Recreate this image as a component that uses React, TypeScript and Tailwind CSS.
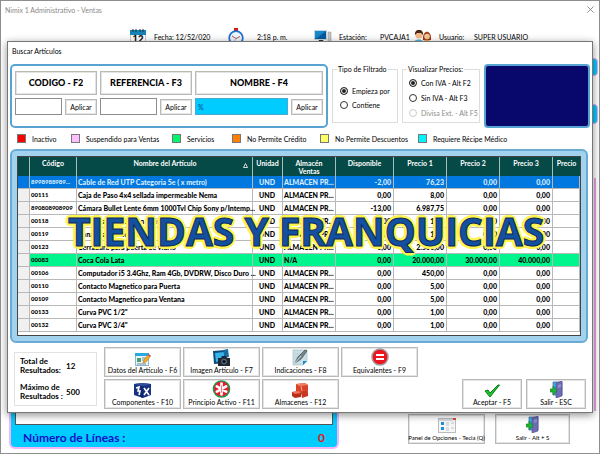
import React, { useState } from "react";

const btn = "border border-[#b9b9b9] bg-white text-black shadow-[inset_0_0_0_1px_#e4e4e4]";

function Calendar() {
  return (
    <svg viewBox="0 0 16 17" className="h-[17px] w-4 shrink-0">
      <rect x="0" y="2" width="16" height="15" fill="#fff" stroke="#999" strokeWidth="1" />
      <rect x="0" y="1" width="16" height="5" fill="#1583b5" />
      <path d="M3 0v3M6 0v3M10 0v3M13 0v3" stroke="#234" strokeWidth="1" />
      <text x="8" y="14" textAnchor="middle" fontSize="10" fontWeight="700" fontFamily="Liberation Sans, sans-serif" fill="#111">12</text>
    </svg>
  );
}

function Clock() {
  return (
    <svg viewBox="0 0 16 18" className="h-[18px] w-4 shrink-0">
      <rect x="6" y="0" width="4" height="3" fill="#d01818" />
      <circle cx="8" cy="10" r="6.8" fill="#eef6ff" stroke="#2374cf" strokeWidth="1.8" />
      <path d="M4 8l4 2.500 4-2" fill="none" stroke="#b05050" strokeWidth="1" />
      <path d="M8 10.500l-2 3" stroke="#888" strokeWidth=".6" />
    </svg>
  );
}

function Computer() {
  return (
    <svg viewBox="0 0 18 14" className="h-[14px] w-[18px] shrink-0">
      <rect x="0" y="0" width="13" height="10" fill="#c9d6dc" />
      <rect x="1" y="1" width="11" height="8" fill="#065a9c" />
      <path d="M1 1h11L3 8H1z" fill="#1788cc" />
      <path d="M5 10h4l1 2H4z" fill="#333" />
      <path d="M14 2h3v12h-3z" fill="#c3c8ca" stroke="#888" strokeWidth=".5" />
    </svg>
  );
}

function People() {
  return (
    <svg viewBox="0 0 19 14" className="h-[14px] w-[19px] shrink-0">
      <path d="M0 14c0-6 11-6 12 0z" fill="#53b7da" />
      <circle cx="6" cy="5" r="3.600" fill="#f3b98a" />
      <path d="M2 5c-1-7 9-7 8 0L8 3H4z" fill="#4a2713" />
      <path d="M10 10c-1-11 9-11 8 0z" fill="#9a3e10" />
      <circle cx="14" cy="6.500" r="2.800" fill="#f7c69b" />
      <path d="M9 14c0-5 9-6 10 0z" fill="#f3a25d" />
    </svg>
  );
}

function CardEdit() {
  return (
    <svg viewBox="0 0 16 14" className="h-[14px] w-4">
      <rect x=".5" y="1.500" width="13" height="12" fill="#e8f5fa" stroke="#86b9cf" />
      <rect x="0" y="1" width="14" height="3" fill="#29a9dc" />
      <rect x="2" y="6" width="4" height="4" fill="#48a070" />
      <path d="M7 6h4M7 8h4M2 12h9" stroke="#789" strokeWidth="1" />
      <path d="M8 11l1-3 4-5 2 2-4 5z" fill="#f6ac1d" stroke="#b06a14" strokeWidth=".5" />
      <path d="M13 3l1-1 2 2-1 1z" fill="#e23a3a" />
    </svg>
  );
}

function Photo() {
  return (
    <svg viewBox="0 0 17 17" className="h-[17px] w-[17px]">
      <path d="M0 2l12-1 1 13-12 1z" fill="#0b4c7b" />
      <path d="M2 4l9-1v9l-8 1z" fill="#36b4ea" />
      <path d="M10 1l5-1 1 8-4 1z" fill="#176ca2" />
      <path d="M5 9h3l1-2h4l1 2h3v8H5z" fill="#1e2630" />
      <circle cx="11" cy="12.500" r="3" fill="#4d5f72" />
      <circle cx="11" cy="12.500" r="1.600" fill="#0b1320" />
    </svg>
  );
}

function Note() {
  return (
    <svg viewBox="0 0 17 17" className="h-[17px] w-[17px]">
      <path d="M1 1h14v11l-4 4H1z" fill="#c9dfe5" stroke="#9bb6be" strokeWidth=".6" />
      <path d="M11 16v-4h4z" fill="#1689c7" />
      <path d="M3 5h9M3 8h9M3 11h6" stroke="#a5c0c8" strokeWidth=".7" />
      <path d="M3 14l3-6 7-7 2 1-6 8z" fill="#77858b" stroke="#3e4b50" strokeWidth=".7" />
      <path d="M3 14l6-7" stroke="#e7eff1" strokeWidth=".8" />
    </svg>
  );
}

function Equal() {
  return (
    <svg viewBox="0 0 18 18" className="h-[18px] w-[18px]">
      <circle cx="9" cy="9" r="8" fill="#ee1420" stroke="#9c9c9c" strokeWidth="1.500" />
      <path d="M5 7h8M5 11h8" stroke="#fff" strokeWidth="2" />
    </svg>
  );
}

function Boxes() {
  return (
    <svg viewBox="0 0 17 16" className="h-4 w-[17px]">
      <path d="M0 2l8-1 9 1v11l-8 3-9-3z" fill="#17307f" />
      <path d="M0 2l8-1 9 1-8 2z" fill="#31509f" />
      <path d="M8 4v12" stroke="#0a1c57" />
      <path d="M2 6l3-1-1 4 2 0-1 4M10 6l5 7M15 6l-5 7" fill="none" stroke="#fff" strokeWidth="1.600" />
    </svg>
  );
}

function Star() {
  return (
    <svg viewBox="0 0 20 20" className="h-[19px] w-[19px]">
      <circle cx="10" cy="10" r="9" fill="#e51f31" stroke="#1c9a4b" strokeWidth="1.600" />
      <path d="M10 4v12M4.800 7l10.400 6M15.200 7L4.800 13" stroke="#fff" strokeWidth="3" strokeLinecap="round" />
      <path d="M10 6v8" stroke="#e51f31" strokeWidth=".7" />
    </svg>
  );
}

function Warehouse() {
  return (
    <svg viewBox="0 0 17 15" className="h-[15px] w-[17px]">
      <path d="M4 1l9-1 3 2v8l-9 1-3-3z" fill="#d8432a" />
      <path d="M4 1l9-1 3 2-9 1z" fill="#f28064" />
      <path d="M0 9l7-1 2 2v4l-6 1-3-2z" fill="#b92d19" />
      <path d="M0 9l7-1 2 2-6 1z" fill="#ee7657" />
      <path d="M9 9l5-1 2 2v3l-6 2z" fill="#c63821" />
      <path d="M9 3l1 5" stroke="#f4a083" />
    </svg>
  );
}

function Check() {
  return (
    <svg viewBox="0 0 16 14" className="h-[14px] w-4">
      <path d="M1 7l3-1 2 3 8-8 1.500 0L6 13z" fill="#20c32e" stroke="#087c16" strokeWidth="1" />
    </svg>
  );
}

function Door() {
  return (
    <svg viewBox="0 0 13 17" className="h-[17px] w-[13px]">
      <path d="M3 1h9v13H3z" fill="#35b2e9" stroke="#4f5c93" strokeWidth=".7" />
      <path d="M6 2l6-2v15l-6 2z" fill="#6d6cb4" stroke="#4b4a86" strokeWidth=".6" />
      <path d="M8 4l3-1v3l-3 1z" fill="#8f90cc" />
      <path d="M0 8h3V5l4 4.500L3 14v-3H0z" fill="#21b534" stroke="#0b7a1e" strokeWidth=".6" />
    </svg>
  );
}

function Options() {
  return (
    <svg viewBox="0 0 18 15" className="h-[15px] w-[18px]">
      <rect x=".5" y=".5" width="17" height="14" fill="#f6f6f6" stroke="#b9bcc0" />
      <path d="M1 2h14" stroke="#d6d9dd" strokeWidth="2" />
      <rect x="15" y="0" width="3" height="2" fill="#e2473a" />
      <rect x="3" y="4" width="3" height="3" fill="#1f8fdd" />
      <rect x="3" y="9" width="3" height="3" fill="#1f8fdd" />
      <path d="M8 5h3M13 5h3M8 7h3M8 10h3M13 10h3M8 12h3" stroke="#c1c4c8" />
    </svg>
  );
}

function SearchGroup({ id, label, className, selected }: { id: string; label: string; className: string; selected?: boolean }) {
  return (
    <div className={"flex min-w-0 flex-col gap-[3px] " + className}>
      <button id={id} className={btn + " h-6 w-full text-[9px] leading-4 font-black whitespace-nowrap"}>{label}</button>
      <div className="flex items-center gap-[3px]">
        <input
          aria-labelledby={id}
          defaultValue={selected ? "%" : ""}
          className={
            "h-[17px] w-0 min-w-0 flex-1 border px-0.5 outline-none " +
            (selected ? "border-[#4ba9d0] bg-[#00ccff] text-[#0b3b8c]" : "border-[#8c8c8c] bg-white")
          }
        />
        <button className={btn + " h-4 w-8 leading-3"}>Aplicar</button>
      </div>
    </div>
  );
}

function Radio({ name, label, checked, disabled }: { name: string; label: string; checked?: boolean; disabled?: boolean }) {
  return (
    <label className={"flex items-center gap-1 whitespace-nowrap " + (disabled ? "text-[#8c8c8c]" : "")}>
      <input
        type="radio"
        name={name}
        defaultChecked={checked}
        disabled={disabled}
        className="h-2 w-2 shrink-0 appearance-none rounded-full border border-[#333] bg-white checked:bg-[#222] checked:shadow-[inset_0_0_0_1px_#fff] disabled:border-[#ccc]"
      />
      {label}
    </label>
  );
}

const legend = [
  ["bg-[#ff0000]", "Inactivo", "w-[54px]"],
  ["bg-[#ffbfff]", "Suspendido para Ventas", "w-[101px]"],
  ["bg-[#00f56e]", "Servicios", "w-[60px]"],
  ["bg-[#ff8000]", "No Permite Crédito", "w-[88px]"],
  ["bg-[#ffff66]", "No Permite Descuentos", "w-[98px]"],
  ["bg-[#00f5ff]", "Requiere Récipe Médico", ""],
];

const A = "ALMACEN PR...";
const rows = [
  ["8998988989...", "Cable de Red UTP Categoria 5e ( x metro)", A, "-2,00", "76,23", "0,00", "0,00"],
  ["00111", "Caja de Paso 4x4 sellada impermeable Nema", A, "0,00", "8,00", "0,00", "0,00"],
  ["890808908909", "Cámara Bullet Lente 6mm 1000Tvl Chip Sony p/Intemp...", A, "-13,00", "6.987,75", "0,00", "0,00"],
  ["00118", "Canaleta plastica con divisiones", A, "0,00", "1,00", "0,00", "0,00"],
  ["00119", "Canaleta plastica lisa", A, "0,00", "1,00", "0,00", "0,00"],
  ["00123", "Cerradura para puerta de vidrio", A, "0,00", "2.500,00", "0,00", "0,00"],
  ["00083", "Coca Cola Lata", "N/A", "0,00", "20.000,00", "30.000,00", "40.000,00"],
  ["00106", "Computador i5 3.4Ghz, Ram 4Gb, DVDRW, Disco Duro ...", A, "0,00", "450,00", "0,00", "0,00"],
  ["00110", "Contacto Magnetico para Puerta", A, "0,00", "5,00", "0,00", "0,00"],
  ["00109", "Contacto Magnetico para Ventana", A, "0,00", "5,00", "0,00", "0,00"],
  ["00133", "Curva PVC 1/2\"", A, "0,00", "1,00", "0,00", "0,00"],
  ["00132", "Curva PVC 3/4\"", A, "0,00", "1,00", "0,00", "0,00"],
];

const cell = "border-r border-b border-[#b8b8b8] pr-0.5 pl-px whitespace-nowrap";
const head = "border-r border-[#a9bcb9] px-0.5 pt-0.5 align-top font-bold";

function Articles() {
  const [selected, setSelected] = useState(0);
  return (
    <table className="w-full table-fixed border-separate border-spacing-0 leading-3 font-black text-black">
      <colgroup>
        <col className="w-3" />
        <col className="w-[47px]" />
        <col className="w-[176px]" />
        <col className="w-[30px]" />
        <col className="w-[53px]" />
        <col className="w-[58px]" />
        <col className="w-[53px]" />
        <col className="w-[53px]" />
        <col className="w-[53px]" />
        <col />
      </colgroup>
      <thead>
        <tr className="h-[19px] bg-[#064a47] leading-[8px] text-white">
          <th className={head}></th>
          <th className={head}>Código</th>
          <th className={head}>
            <span className="flex items-start">
              <span className="flex-1 pl-2">Nombre del Artículo</span>
              <svg viewBox="0 0 5 5" className="mt-1 mr-0.5 h-[5px] w-[5px]"><path d="M2.500 .5L4.500 4.500H.5z" fill="none" stroke="#fff" strokeWidth=".8" /></svg>
            </span>
          </th>
          <th className={head}>Unidad</th>
          <th className={head}>Almacén Ventas</th>
          <th className={head}>Disponible</th>
          <th className={head}>Precio 1</th>
          <th className={head}>Precio 2</th>
          <th className={head}>Precio 3</th>
          <th className="px-0.5 pt-0.5 align-top font-bold whitespace-nowrap">Precio</th>
        </tr>
      </thead>
      <tbody>
        {rows.map((r, i) => (
          <tr
            key={r[0]}
            onClick={() => setSelected(i)}
            className={"h-[13px] " + (i === selected ? "bg-[#0078e0] text-[#d8ecff]" : i === 6 ? "bg-[#00f58c]" : "bg-white")}
          >
            <td className={cell + (i === selected ? "" : " bg-[#f0f0f0]")}></td>
            <td className={cell + " text-[6px]"}>{r[0]}</td>
            <td className={cell}>{r[1]}</td>
            <td className={cell + " text-center"}>UND</td>
            <td className={cell}>{r[2]}</td>
            {r.slice(3).map((v, j) => (
              <td key={j} className={cell + " text-right"}>{v}</td>
            ))}
            <td className={cell}></td>
          </tr>
        ))}
      </tbody>
    </table>
  );
}

function ToolButton({ icon, label }: { icon: React.ReactNode; label: string }) {
  return (
    <button className={btn + " flex h-[30px] min-w-0 flex-col items-center justify-end pb-px leading-[9px] whitespace-nowrap"}>
      {icon}
      <span>{label}</span>
    </button>
  );
}

function SearchDialog() {
  return (
    <section
      role="dialog"
      aria-label="Buscar Artículos"
      className="absolute inset-x-[6px] top-[40px] border border-[#777] bg-white px-[2px] pb-[3px] shadow-[0_2px_8px_rgba(0,0,0,0.45)]"
    >
      <h1 className="pl-[2px] leading-[18px]">Buscar Artículos</h1>
      <div className="mt-1 flex h-16 gap-1">
        <div className="flex min-w-0 flex-1 gap-[3px] rounded-[5px] border-2 border-[#57a4d2] px-[3px] pt-[5px]">
          <SearchGroup id="codigo" label="CODIGO - F2" className="w-[82px]" />
          <SearchGroup id="referencia" label="REFERENCIA - F3" className="w-[92px]" />
          <SearchGroup id="nombre" label="NOMBRE - F4" className="flex-1" selected />
        </div>
        <fieldset className="relative my-[5px] flex w-[66px] min-w-0 shrink-0 flex-col justify-center gap-[5px] border border-[#dcdcdc] pt-1 pl-[7px] leading-[9px]">
          <legend className="absolute -top-[5px] left-1 bg-white px-px whitespace-nowrap">Tipo de Filtrado</legend>
          <Radio name="tipo" label="Empieza por" checked />
          <Radio name="tipo" label="Contiene" />
        </fieldset>
        <fieldset className="relative my-[5px] flex w-[78px] min-w-0 shrink-0 flex-col justify-center gap-[6px] border border-[#dcdcdc] pt-1 pl-[6px] leading-[9px]">
          <legend className="absolute -top-[5px] left-1 bg-white px-px whitespace-nowrap">Visualizar Precios:</legend>
          <Radio name="precio" label="Con IVA - Alt F2" checked />
          <Radio name="precio" label="Sin IVA - Alt F3" />
          <Radio name="precio" label="Divisa Ext. - Alt F5" disabled />
        </fieldset>
        <div className="w-[106px] shrink-0 rounded-[4px] border-2 border-[#57a4d2] bg-[#08086c]"></div>
      </div>
      <ul className="flex h-[21px] items-center pl-[7px] leading-3">
        {legend.map(([color, label, width]) => (
          <li key={label} className={"flex shrink-0 items-center gap-[6px] whitespace-nowrap " + width}>
            <span className={"h-[9px] w-[9px] shrink-0 border border-[#777] " + color}></span>
            {label}
          </li>
        ))}
      </ul>
      <div className="relative mr-[2px] rounded-[6px] border-2 border-[#68abd4] bg-[#a2d2ee] p-[5px]">
        <div className="border border-[#444] bg-white pb-[3px]">
          <Articles />
        </div>
        <p className="pointer-events-none absolute top-[53px] left-[56px] font-['Open_Sans',sans-serif] text-[39px] leading-[54px] font-bold whitespace-nowrap text-[#1450a0] [-webkit-text-stroke:1px_#0b2a5c] [text-shadow:3px_0_#fff34d,-3px_0_#fff34d,0_3px_#fff34d,0_-3px_#fff34d,2px_2px_#fff34d,-2px_-2px_#fff34d,2px_-2px_#fff34d,-2px_2px_#fff34d,0_0_3px_#fff34d]">
          TIENDAS Y FRANQUICIAS
        </p>
      </div>
      <div className="flex px-[4px] pt-1">
        <dl className="mt-[5px] grid h-[54px] w-[83px] grid-cols-[46px_1fr] items-center border border-[#e2e2e2] px-[5px] text-[8px] leading-[9px] font-bold text-black">
          <dt>Total de Resultados:</dt>
          <dd>12</dd>
          <dt>Máximo de Resultados :</dt>
          <dd>500</dd>
        </dl>
        <div className="ml-[7px] grid grid-cols-[repeat(4,77px)] gap-x-[2px] gap-y-[2px]">
          <ToolButton icon={<CardEdit />} label="Datos del Artículo - F6" />
          <ToolButton icon={<Photo />} label="Imagen  Artículo - F7" />
          <ToolButton icon={<Note />} label="Indicaciones - F8" />
          <ToolButton icon={<Equal />} label="Equivalentes - F9" />
          <ToolButton icon={<Boxes />} label="Componentes - F10" />
          <ToolButton icon={<Star />} label="Principio Activo - F11" />
          <ToolButton icon={<Warehouse />} label="Almacenes - F12" />
        </div>
        <div className="ml-auto grid grid-cols-[60px_60px] items-end gap-1">
          <ToolButton icon={<Check />} label="Aceptar - F5" />
          <ToolButton icon={<Door />} label="Salir - ESC" />
        </div>
      </div>
    </section>
  );
}

export default function App() {
  return (
    <div className="relative flex min-h-screen flex-col overflow-hidden border border-[#8d8d8d] bg-white font-['Lato','Open_Sans',sans-serif] text-[7px] text-black">
      <header className="flex h-[25px] items-start justify-between px-1 pt-[3px]">
        <span className="leading-3 text-[#8a8a8a]">Nimix 1 Administrativo - Ventas</span>
        <button aria-label="Cerrar" className="mt-[2px] mr-[1px] text-[#777]">
          <svg viewBox="0 0 7 7" className="h-[7px] w-[7px]"><path d="M.5 .5l6 6M6.500 .5l-6 6" stroke="currentColor" strokeWidth=".8" /></svg>
        </button>
      </header>
      <div className="flex h-[22px] items-center pl-[129px] leading-3 whitespace-nowrap">
        <Calendar />
        <span className="ml-2 w-[74px]">Fecha: 12/52/020</span>
        <Clock />
        <span className="ml-[13px] w-[57px]">2:18 p. m.</span>
        <Computer />
        <span className="ml-[7px] w-[41px]">Estación:</span>
        <span className="w-[33px]">PVCAJA1</span>
        <People />
        <span className="ml-[7px] w-[35px]">Usuario:</span>
        <span>SUPER USUARIO</span>
      </div>
      <div className="mt-[10px] mr-px flex flex-1 flex-col items-end">
        <div className="h-[18px] w-20 rounded-r-[4px] border border-[#f3a5f0] bg-[#00ccff]"></div>
        <div className="mt-[28px] h-[20px] w-20 rounded-r-[4px] border border-[#f3a5f0] bg-[#00ccff]"></div>
        <div className="mt-[54px] mr-[2px] w-20 flex-1 border-r-2 border-[#e7a0e8]"></div>
      </div>
      <div className="flex items-end justify-between pr-[29px] pb-1 pl-2">
        <div className="w-[330px] rounded-b-[6px] border-2 border-t-0 border-[#f3b5f7] bg-[#00ccff] px-[4px]">
          <div className="h-[14px] border border-t-0 border-[#555] bg-white"></div>
          <p className="flex justify-between px-2 pt-1 text-[12px] leading-[18px] font-bold text-[#1010c8]">
            <span>Número de Líneas :</span>
            <span className="text-[#ee1111]">0</span>
          </p>
        </div>
        <div className="mb-[5px] grid grid-cols-[77px_75px] gap-[10px] text-[6px]">
          <ToolButton icon={<Options />} label="Panel de Opciones - Tecla (Q)" />
          <ToolButton icon={<Door />} label="Salir - Alt + S" />
        </div>
      </div>
      <SearchDialog />
    </div>
  );
}
